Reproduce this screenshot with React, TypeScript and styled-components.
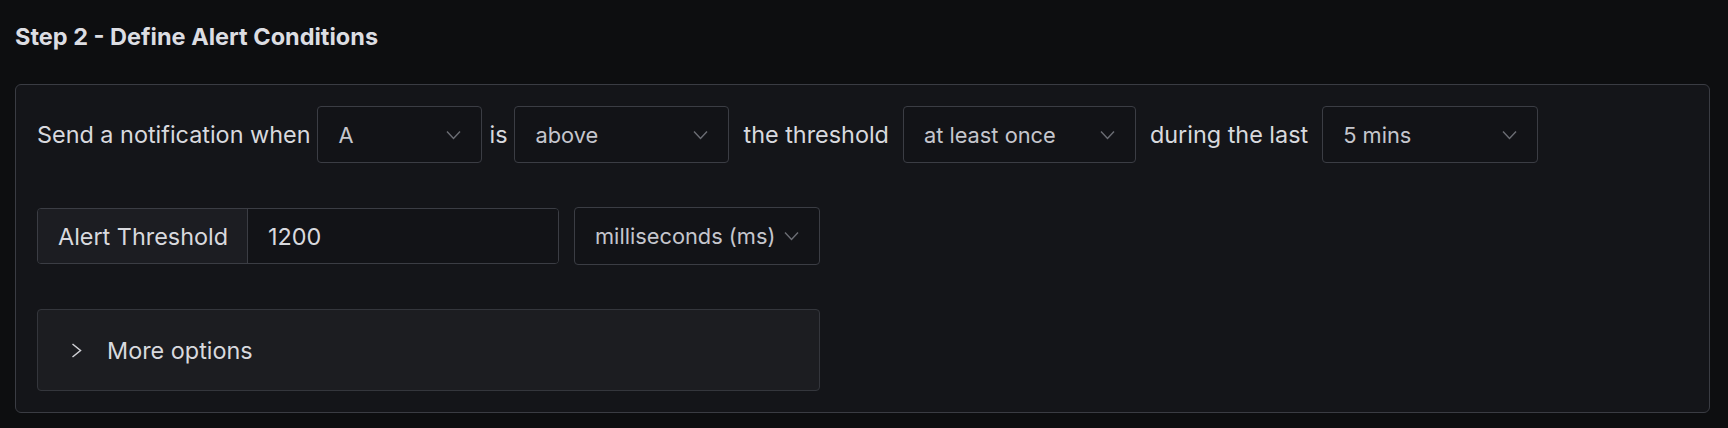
import * as React from 'react';
import styled, { createGlobalStyle } from 'styled-components';

const GlobalStyle = createGlobalStyle`
  html, body {
    margin: 0;
    padding: 0;
    background: #0d0e10;
  }
  body {
    font-family: Inter, "Noto Sans", sans-serif;
    color: #d8d9de;
  }
`;

const Page = styled.div`
  padding: 21px 18px 16px 15px;
`;

const Title = styled.h4`
  margin: 0 0 31px 0;
  font-size: 23.5px;
  font-weight: 700;
  line-height: 32px;
  color: #dcdde2;
`;

const Panel = styled.div`
  background: #141519;
  border: 1px solid #3a3c43;
  border-radius: 6px;
  padding: 21px 22px 21px 21px;
  display: flex;
  flex-direction: column;
  gap: 44px;
`;

const Row = styled.div<{ $gap?: number }>`
  display: flex;
  align-items: center;
  gap: ${(p) => p.$gap ?? 7}px;
`;

const Text = styled.span<{ $pad?: number }>`
  font-size: 23.4px;
  color: #d8d9de;
  padding: 0 ${(p) => p.$pad ?? 0}px;
  white-space: nowrap;
`;

const SelectBox = styled.div<{ $width: number; $height?: number }>`
  width: ${(p) => p.$width}px;
  height: ${(p) => p.$height ?? 57}px;
  box-sizing: border-box;
  border: 1px solid #3b3d44;
  border-radius: 4px;
  background: #121317;
  display: flex;
  align-items: center;
  justify-content: space-between;
  padding: 0 20px 0 20px;
  font-size: 21.8px;
  color: #c5c6cd;
  white-space: nowrap;
`;

const Chevron = styled.svg`
  width: 15px;
  height: 10px;
  flex: none;
`;

const InputGroup = styled.div`
  display: flex;
  height: 56px;
  box-sizing: border-box;
  border: 1px solid #3b3d44;
  border-radius: 4px;
  overflow: hidden;
`;

const Addon = styled.div`
  background: #1c1d22;
  display: flex;
  align-items: center;
  padding: 0 19px 0 20px;
  border-right: 1px solid #3b3d44;
  font-size: 23.4px;
  color: #d8d9de;
`;

const Input = styled.div`
  width: 290px;
  display: flex;
  align-items: center;
  padding-left: 20px;
  background: #121317;
  font-size: 23.4px;
  color: #d8d9de;
`;

const Collapse = styled.div`
  width: 783px;
  height: 82px;
  box-sizing: border-box;
  background: #1c1d21;
  border: 1px solid #34363c;
  border-radius: 4px;
  display: flex;
  align-items: center;
  gap: 25px;
  padding-left: 33px;
  font-size: 23.4px;
  color: #d8d9de;
`;

const Down = () => (
  <Chevron viewBox="0 0 15 10">
    <path d="M1 1.5 L7.5 8.5 L14 1.5" fill="none" stroke="#6b6d74" strokeWidth="1.4" />
  </Chevron>
);

function Select({ value, width, height }: { value: string; width: number; height?: number }) {
  return (
    <SelectBox $width={width} $height={height}>
      <span>{value}</span>
      <Down />
    </SelectBox>
  );
}

export default function App() {
  return (
    <Page>
      <GlobalStyle />
      <Title>Step 2 - Define Alert Conditions</Title>
      <Panel>
        <Row>
          <Text>Send a notification when</Text>
          <Select value="A" width={165} />
          <Text>is</Text>
          <Select value="above" width={215} />
          <Text $pad={7}>the threshold</Text>
          <Select value="at least once" width={233} />
          <Text $pad={7}>during the last</Text>
          <Select value="5 mins" width={216} />
        </Row>
        <Row $gap={15}>
          <InputGroup>
            <Addon>Alert Threshold</Addon>
            <Input>1200</Input>
          </InputGroup>
          <Select value="milliseconds (ms)" width={246} height={58} />
        </Row>
        <Collapse>
          <svg width="11" height="15" viewBox="0 0 11 15">
            <path d="M1.5 1 L9.5 7.5 L1.5 14" fill="none" stroke="#d0d1d6" strokeWidth="1.5" />
          </svg>
          <span>More options</span>
        </Collapse>
      </Panel>
    </Page>
  );
}
